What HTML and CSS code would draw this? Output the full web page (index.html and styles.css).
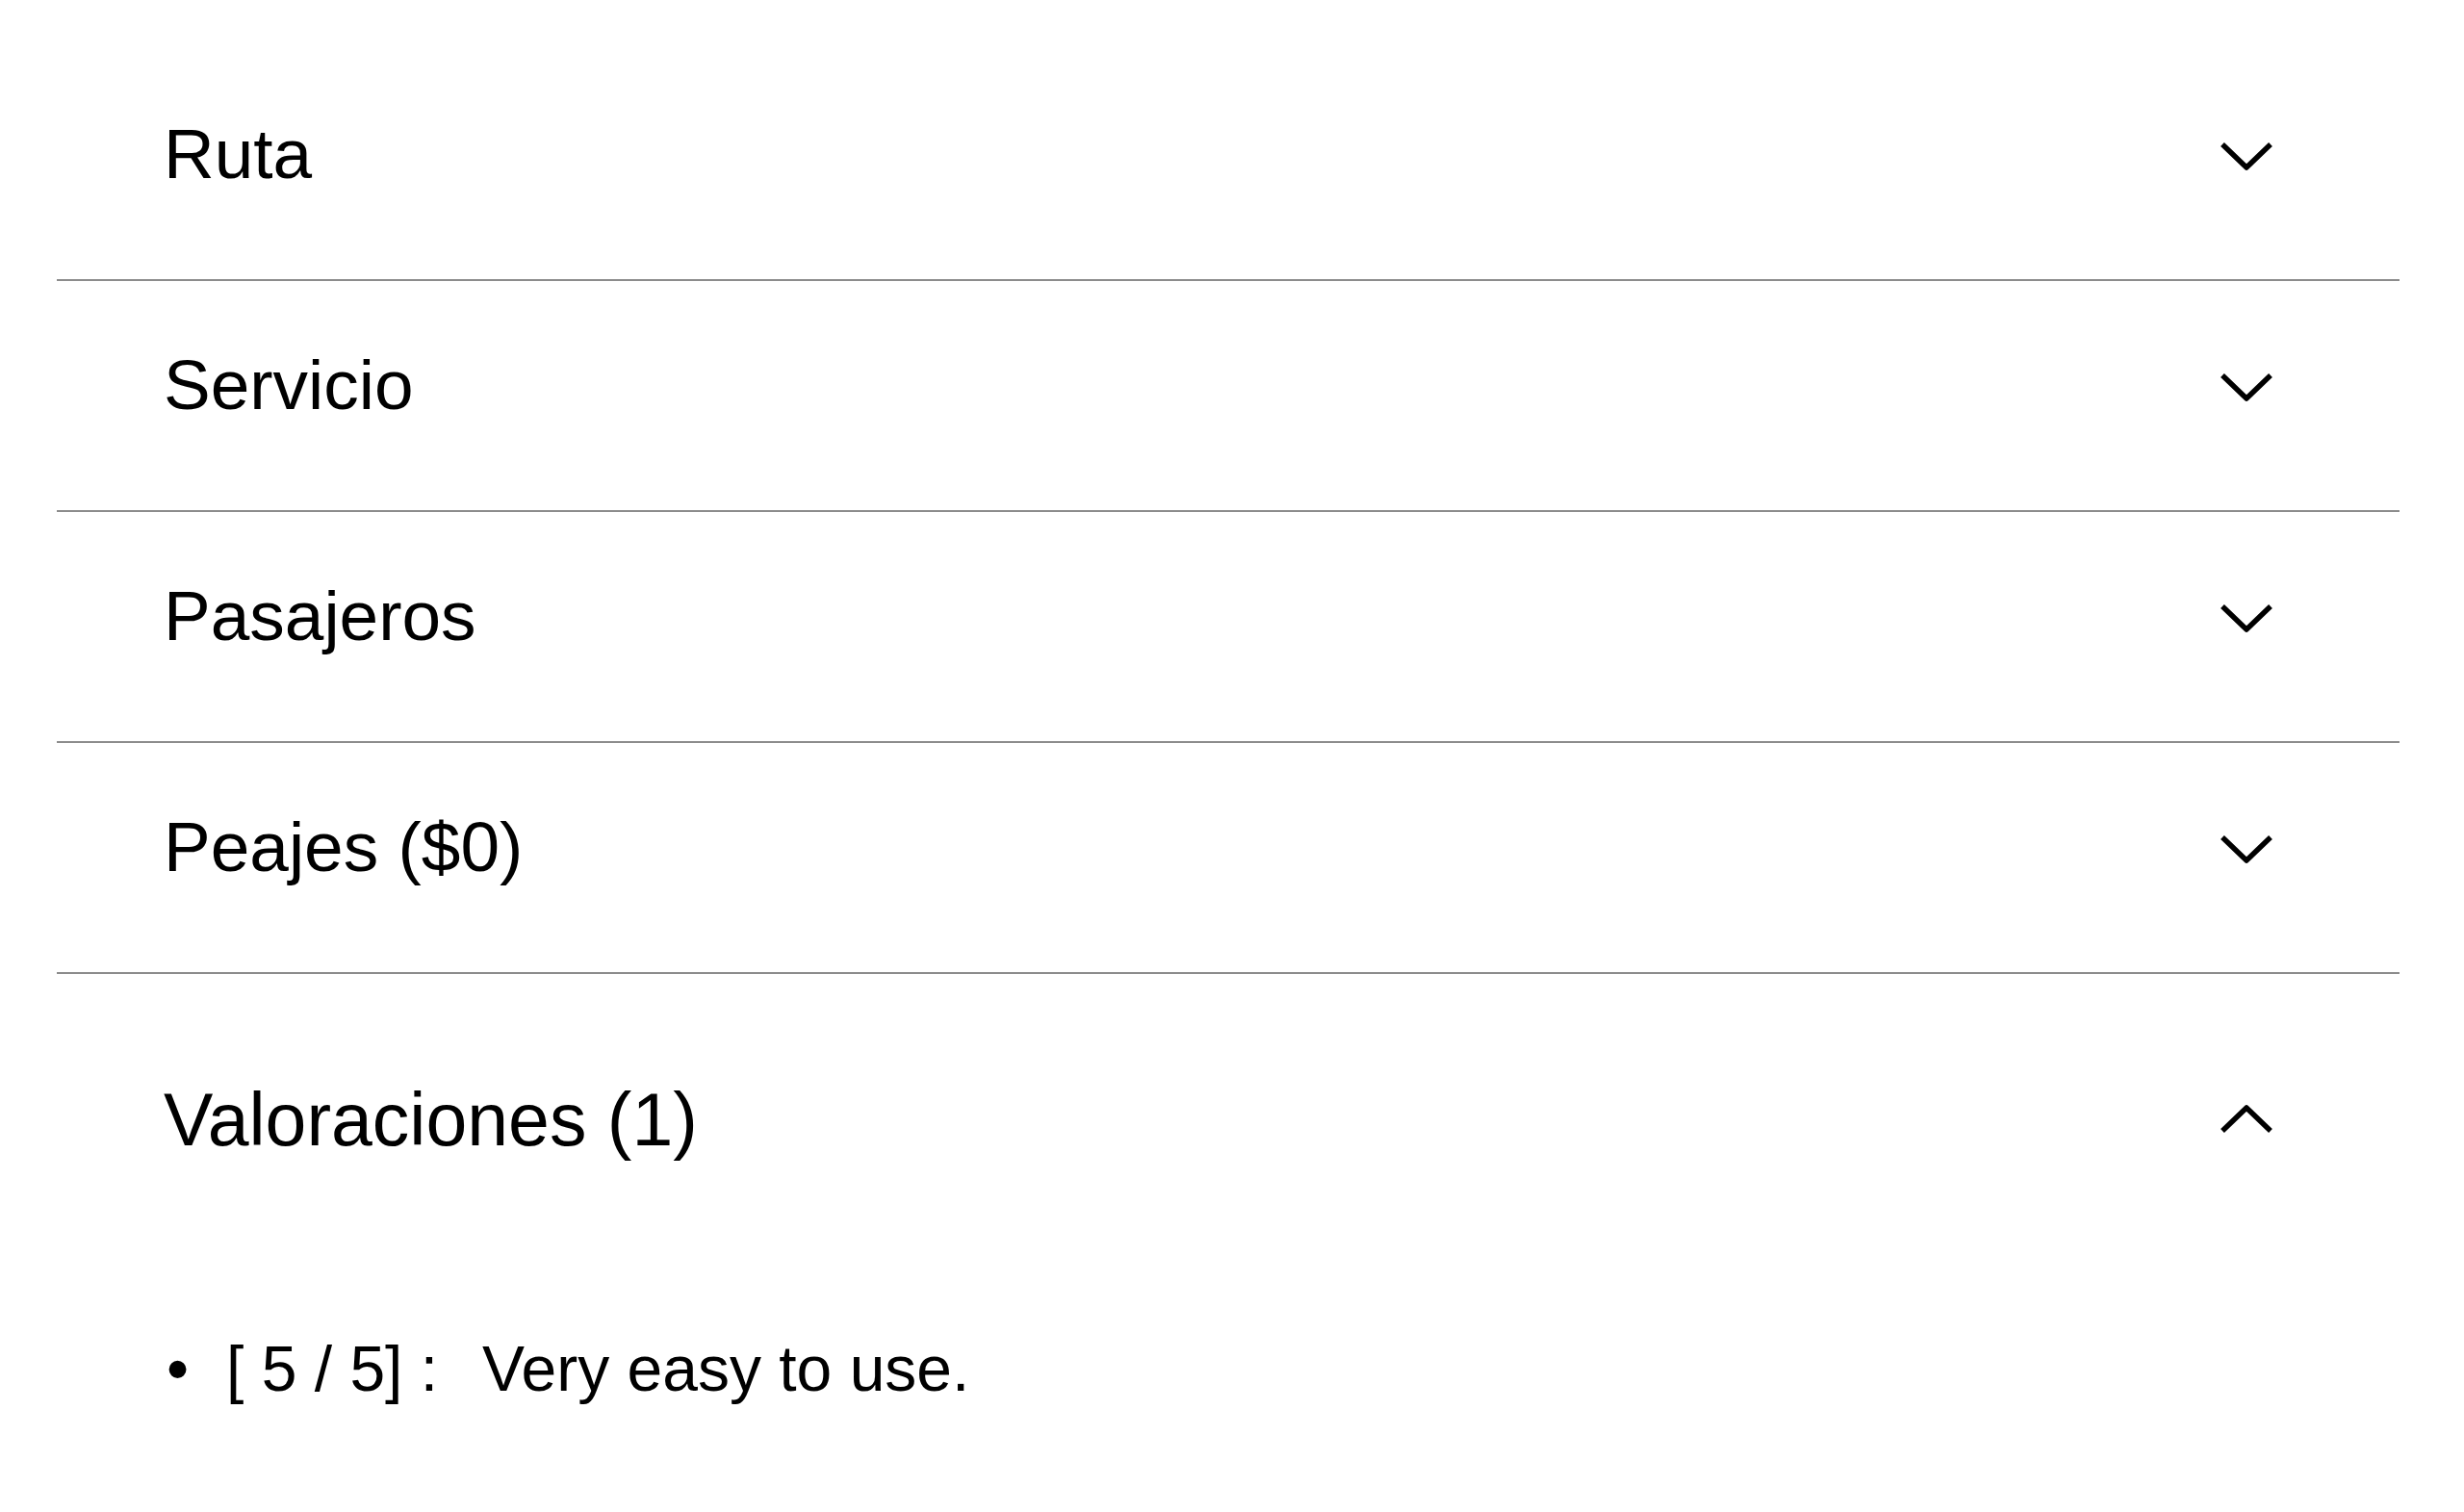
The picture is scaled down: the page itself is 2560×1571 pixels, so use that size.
FILE: index.html
```html
<!DOCTYPE html>
<html lang="es">
<head>
<meta charset="utf-8">
<title>Detalles</title>
<link rel="stylesheet" href="styles.css">
</head>
<body>
<div class="accordion">
  <div class="item">
    <div class="header">
      <span class="title">Ruta</span>
      <svg class="chev" width="56" height="30" viewBox="0 0 56 30"><polyline points="3,3 28,27 53,3"/></svg>
    </div>
  </div>
  <div class="item">
    <div class="header">
      <span class="title">Servicio</span>
      <svg class="chev" width="56" height="30" viewBox="0 0 56 30"><polyline points="3,3 28,27 53,3"/></svg>
    </div>
  </div>
  <div class="item">
    <div class="header">
      <span class="title">Pasajeros</span>
      <svg class="chev" width="56" height="30" viewBox="0 0 56 30"><polyline points="3,3 28,27 53,3"/></svg>
    </div>
  </div>
  <div class="item">
    <div class="header">
      <span class="title">Peajes ($0)</span>
      <svg class="chev" width="56" height="30" viewBox="0 0 56 30"><polyline points="3,3 28,27 53,3"/></svg>
    </div>
  </div>
  <div class="item open">
    <div class="header">
      <span class="title">Valoraciones (1)</span>
      <svg class="chev" width="56" height="30" viewBox="0 0 56 30"><polyline points="3,27 28,3 53,27"/></svg>
    </div>
    <div class="panel">
      <ul class="reviews">
        <li><span class="bullet">•</span><span class="score">[ 5 / 5] :</span><span class="text">Very easy to use.</span></li>
      </ul>
    </div>
  </div>
</div>
</body>
</html>
```
FILE: styles.css
```css
html, body {
  margin: 0;
  padding: 0;
  background: #ffffff;
}
body {
  font-family: "Liberation Sans", Arial, sans-serif;
  color: #000000;
}
.accordion {
  margin-left: 59px;
  width: 2434px;
  padding-top: 52px;
}
.item {
  border-bottom: 2px solid #8c8c8c;
}
.item.open {
  border-bottom: none;
}
.header {
  display: flex;
  align-items: center;
  justify-content: space-between;
  padding: 64px 131px 86px 111px;
}
.title {
  font-size: 73px;
  line-height: 88px;
}
.chev {
  display: block;
  margin-top: 4px;
}
.chev polyline {
  fill: none;
  stroke: #000000;
  stroke-width: 5.5;
  stroke-linecap: butt;
  stroke-linejoin: round;
}
.open .header {
  padding-top: 107px;
  padding-bottom: 0;
}
.open .title {
  font-size: 77px;
}
.open .chev {
  margin-top: 0;
}
.panel {
  padding: 175px 131px 40px 114px;
}
.reviews {
  list-style: none;
  margin: 0;
  padding: 0;
}
.reviews li {
  display: flex;
  align-items: baseline;
  font-size: 66px;
  line-height: 80px;
}
.bullet {
  width: 62px;
}
.score {
  margin-right: 46px;
}
```
